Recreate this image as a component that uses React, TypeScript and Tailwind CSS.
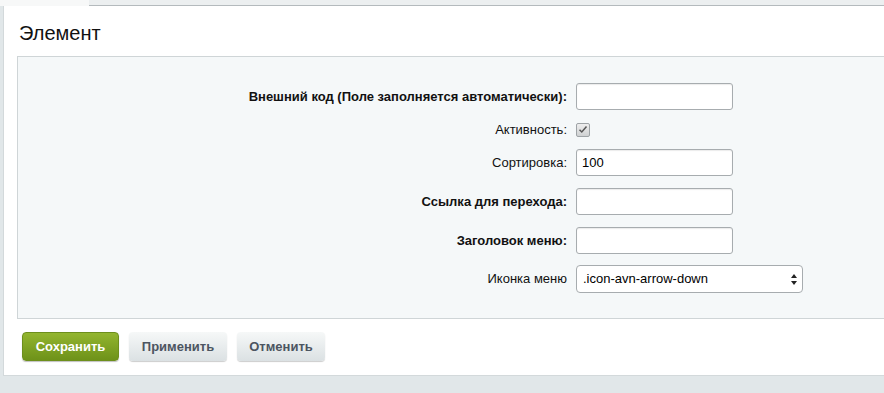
const font = { fontFamily: '"Liberation Sans", Arial, sans-serif' };

function Row({ label, bold, children, className }: { label: string; bold?: boolean; children: React.ReactNode; className?: string }) {
  return (
    <div className={`flex items-center ${className ?? ''}`}>
      <div className={`w-[558px] pr-[9px] text-right text-[13px] text-[#111] ${bold ? 'font-bold' : ''}`}>{label}</div>
      {children}
    </div>
  );
}

function TextInput({ value }: { value?: string }) {
  return (
    <div className="flex h-[27px] w-[157px] items-center rounded-[3px] border border-[#a7acaf] bg-white pl-[5px] text-[13px] text-[#000] shadow-[inset_0_1px_1px_rgba(0,0,0,0.08)]">
      {value}
    </div>
  );
}

export default function App() {
  return (
    <div className="h-[393px] w-[884px] overflow-hidden bg-[#e1e7e9]" style={font}>
      {/* top strip with tab */}
      <div className="flex h-[6px]">
        <div className="w-[89px] bg-[#f7f8f8]" />
        <div className="flex-1 border-b border-[#b4babd] bg-[#eceff0]" />
      </div>

      {/* card */}
      <div className="ml-[3px] w-[900px] border-b border-l border-[#d3d9db] bg-white pb-[14px]">
        <h1 className="h-[50px] pl-[15px] pt-[15px] text-[20px] leading-[24px] text-[#111]">Элемент</h1>

        <div className="ml-[13px] border-b border-l border-t border-[#cfd5d7] bg-[#f5f8f9] pb-[25px] pt-[26px]">
          <Row label="Внешний код (Поле заполняется автоматически):" bold>
            <TextInput />
          </Row>
          <Row label="Активность:" className="mt-[6px] h-[27px]">
            <div className="flex h-[14px] w-[14px] items-center justify-center rounded-[2px] border border-[#9ea3a6] bg-gradient-to-b from-[#eeeeee] to-[#cfd1d2]">
              <svg width="10" height="9" viewBox="0 0 10 9">
                <path d="M1.5 4.8 L3.8 7 L8.5 1.5" fill="none" stroke="#555" strokeWidth="1.5" />
              </svg>
            </div>
          </Row>
          <Row label="Сортировка:" className="mt-[6px]">
            <TextInput value="100" />
          </Row>
          <Row label="Ссылка для перехода:" bold className="mt-[12px]">
            <TextInput />
          </Row>
          <Row label="Заголовок меню:" bold className="mt-[12px]">
            <TextInput />
          </Row>
          <Row label="Иконка меню" className="mt-[11px]">
            <div className="flex h-[28px] w-[227px] items-center justify-between rounded-[4px] border border-[#a7acaf] bg-white pl-[6px] pr-[5px] text-[13px] text-[#000]">
              <span>.icon-avn-arrow-down</span>
              <svg width="6" height="11" viewBox="0 0 6 11">
                <path d="M3 0 L6 4 L0 4 Z" fill="#222" />
                <path d="M0 7 L6 7 L3 11 Z" fill="#222" />
              </svg>
            </div>
          </Row>
        </div>

        <div className="mt-[13px] flex gap-[10px] pl-[18px]">
          <button className="h-[29px] w-[97px] rounded-[4px] border border-[#6d8f1c] bg-gradient-to-b from-[#93b52f] to-[#6e9219] text-[13px] font-bold text-white shadow-[0_1px_1px_rgba(0,0,0,0.25)]">
            Сохранить
          </button>
          <button className="h-[29px] w-[98px] rounded-[4px] bg-gradient-to-b from-[#f6f8f8] to-[#dbe1e3] text-[13px] font-bold text-[#4c5561] shadow-[0_1px_1px_rgba(0,0,0,0.2)]">
            Применить
          </button>
          <button className="h-[29px] w-[88px] rounded-[4px] bg-gradient-to-b from-[#f6f8f8] to-[#dbe1e3] text-[13px] font-bold text-[#4c5561] shadow-[0_1px_1px_rgba(0,0,0,0.2)]">
            Отменить
          </button>
        </div>
      </div>
    </div>
  );
}
